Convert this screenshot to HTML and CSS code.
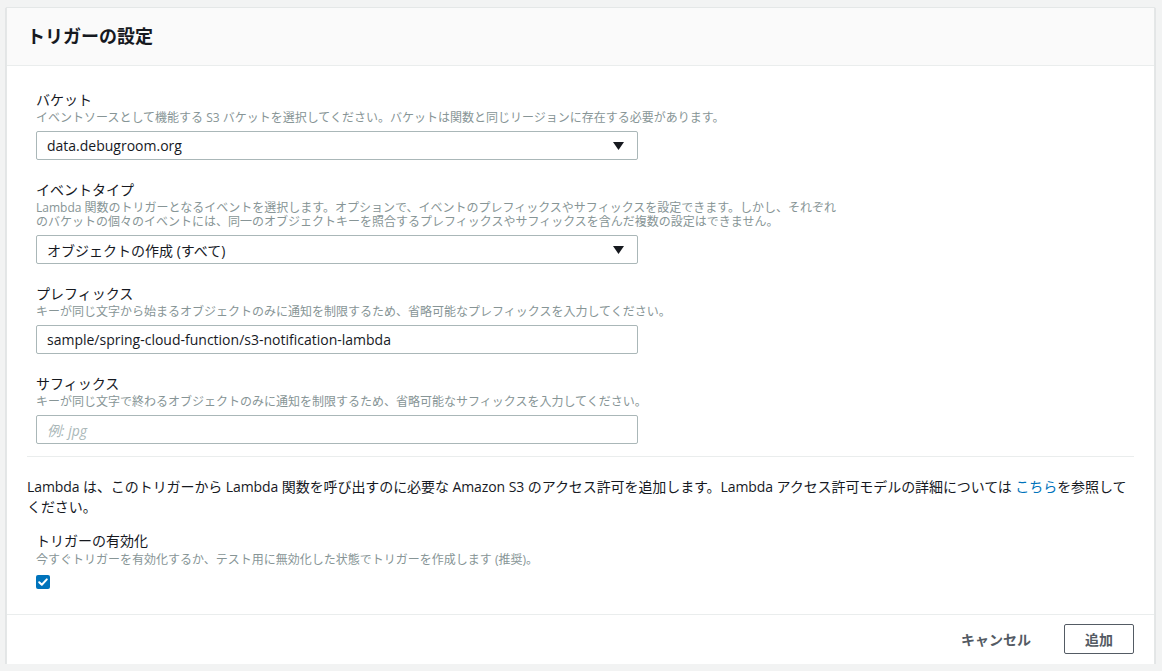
FILE: index.html
```html
<!DOCTYPE html>
<html lang="ja">
<head>
<meta charset="utf-8">
<title>トリガーの設定</title>
<link rel="stylesheet" href="styles.css">
</head>
<body>
<div class="card">
  <div class="card-header">
    <h2 class="title">トリガーの設定</h2>
  </div>
  <div class="card-body">
    <div class="fields">
      <div class="field">
        <div class="label">バケット</div>
        <div class="desc">イベントソースとして機能する S3 バケットを選択してください。バケットは関数と同じリージョンに存在する必要があります。</div>
        <div class="control select">
          <span class="value">data.debugroom.org</span>
          <svg class="caret" width="11" height="8" viewBox="0 0 11 8"><path d="M0 0H11L5.5 8Z" fill="#16191f"/></svg>
        </div>
      </div>
      <div class="field">
        <div class="label">イベントタイプ</div>
        <div class="desc">Lambda 関数のトリガーとなるイベントを選択します。オプションで、イベントのプレフィックスやサフィックスを設定できます。しかし、それぞれ<br>のバケットの個々のイベントには、同一のオブジェクトキーを照合するプレフィックスやサフィックスを含んだ複数の設定はできません。</div>
        <div class="control select">
          <span class="value">オブジェクトの作成 (すべて)</span>
          <svg class="caret" width="11" height="8" viewBox="0 0 11 8"><path d="M0 0H11L5.5 8Z" fill="#16191f"/></svg>
        </div>
      </div>
      <div class="field">
        <div class="label">プレフィックス</div>
        <div class="desc">キーが同じ文字から始まるオブジェクトのみに通知を制限するため、省略可能なプレフィックスを入力してください。</div>
        <div class="control">
          <span class="value">sample/spring-cloud-function/s3-notification-lambda</span>
        </div>
      </div>
      <div class="field">
        <div class="label">サフィックス</div>
        <div class="desc">キーが同じ文字で終わるオブジェクトのみに通知を制限するため、省略可能なサフィックスを入力してください。</div>
        <div class="control">
          <span class="placeholder">例: jpg</span>
        </div>
      </div>
    </div>
    <hr class="divider">
    <p class="note">Lambda は、このトリガーから Lambda 関数を呼び出すのに必要な Amazon S3 のアクセス許可を追加します。Lambda アクセス許可モデルの詳細については <a class="link" href="#">こちら</a>を参照してください。</p>
    <div class="field enable">
      <div class="label">トリガーの有効化</div>
      <div class="desc">今すぐトリガーを有効化するか、テスト用に無効化した状態でトリガーを作成します (推奨)。</div>
      <span class="checkbox">
        <svg width="14" height="14" viewBox="0 0 14 14"><path d="M3.2 7.2L5.8 9.8L10.8 4.4" fill="none" stroke="#fff" stroke-width="2" stroke-linecap="round" stroke-linejoin="round"/></svg>
      </span>
    </div>
  </div>
  <div class="card-footer">
    <button class="btn btn-link">キャンセル</button>
    <button class="btn btn-normal">追加</button>
  </div>
</div>
</body>
</html>
```
FILE: styles.css
```css
* { box-sizing: border-box; }
html, body { margin: 0; padding: 0; }
body {
  background: #f2f3f3;
  padding: 7px 7px 0 6px;
  font-family: "Open Sans", "Noto Sans CJK JP", sans-serif;
  color: #16191f;
}
.card {
  background: #fff;
  border: 1px solid #e4e7e7;
  border-bottom: none;
  box-shadow: 0 1px 1px 0 rgba(0, 28, 36, 0.35);
}
.card-header {
  background: #fafafa;
  border-bottom: 1px solid #eaeded;
  padding: 17px 20px 18px;
}
.title {
  margin: 0;
  font-size: 18px;
  line-height: 22px;
  font-weight: 700;
  color: #16191f;
}
.card-body {
  padding: 24px 20px 25px;
}
.fields {
  display: flex;
  flex-direction: column;
  gap: 20px;
  padding-left: 9px;
}
.field { display: flex; flex-direction: column; align-items: flex-start; }
.label {
  font-size: 14px;
  line-height: 20px;
  color: #16191f;
}
.desc {
  margin-top: 1px;
  font-size: 12px;
  line-height: 14px;
  color: #879596;
}
.control {
  margin-top: 6px;
  width: 602px;
  height: 29px;
  border: 1px solid #aab7b8;
  border-radius: 2px;
  padding: 0 12px 0 10px;
  display: flex;
  align-items: center;
  justify-content: space-between;
  font-size: 14px;
  color: #16191f;
}
.placeholder {
  color: #aab7b8;
  font-style: italic;
}
.caret { margin-right: 1px; }
.divider {
  border: none;
  border-top: 1px solid #eaeded;
  margin: 12px 0 20px 0;
}
.note {
  margin: 0;
  font-size: 14px;
  line-height: 20px;
  color: #16191f;
  letter-spacing: -0.08px;
}
.link { color: #0073bb; text-decoration: none; }
.enable {
  margin-top: 14px;
  padding-left: 9px;
}
.enable .desc { margin-top: 2px; }
.checkbox {
  margin-top: 8px;
  width: 14px;
  height: 14px;
  background: #0073bb;
  border-radius: 2px;
  display: block;
}
.checkbox svg { display: block; }
.card-footer {
  border-top: 1px solid #eaeded;
  padding: 9px 20px 10px;
  display: flex;
  justify-content: flex-end;
  align-items: center;
  gap: 12px;
}
.btn {
  height: 30px;
  padding: 0 20px;
  font-family: inherit;
  font-size: 14px;
  font-weight: 700;
  border-radius: 2px;
  background: #fff;
  cursor: pointer;
}
.btn-link {
  border: 1px solid transparent;
  color: #545b64;
}
.btn-normal {
  border: 1px solid #545b64;
  color: #545b64;
}
```
